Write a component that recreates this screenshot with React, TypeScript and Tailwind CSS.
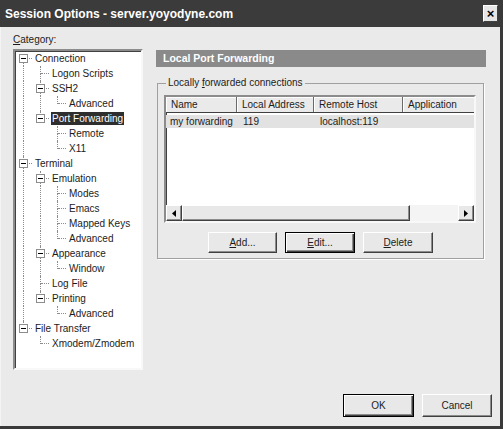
import React from "react";

type Node = { label: string; children?: Node[]; selected?: boolean };

const tree: Node[] = [
  {
    label: "Connection",
    children: [
      { label: "Logon Scripts" },
      { label: "SSH2", children: [{ label: "Advanced" }] },
      {
        label: "Port Forwarding",
        selected: true,
        children: [{ label: "Remote" }, { label: "X11" }],
      },
    ],
  },
  {
    label: "Terminal",
    children: [
      {
        label: "Emulation",
        children: [
          { label: "Modes" },
          { label: "Emacs" },
          { label: "Mapped Keys" },
          { label: "Advanced" },
        ],
      },
      { label: "Appearance", children: [{ label: "Window" }] },
      { label: "Log File" },
      { label: "Printing", children: [{ label: "Advanced" }] },
    ],
  },
  { label: "File Transfer", children: [{ label: "Xmodem/Zmodem" }] },
];

type Row = {
  label: string;
  guides: boolean[];
  hasPrev: boolean;
  hasNext: boolean;
  hasKids: boolean;
  selected: boolean;
};

function flatten(nodes: Node[], depth: number, guides: boolean[]): Row[] {
  const rows: Row[] = [];
  nodes.forEach((n, i) => {
    const hasNext = i < nodes.length - 1;
    rows.push({
      label: n.label,
      guides,
      hasPrev: i > 0 || depth > 0,
      hasNext,
      hasKids: !!n.children,
      selected: !!n.selected,
    });
    if (n.children) rows.push(...flatten(n.children, depth + 1, [...guides, hasNext]));
  });
  return rows;
}

const dots = "border-dotted border-[#8c8c8c]";

function TreeRow({ row }: { row: Row }) {
  return (
    <div className="flex h-[15px] items-center">
      {row.guides.map((g, i) => (
        <div key={i} className="h-full w-[17px] shrink-0">
          {g && <div className={`h-full w-[9px] border-r ${dots}`} />}
        </div>
      ))}
      <div className="relative grid h-full w-[17px] shrink-0 grid-cols-[9px_8px] grid-rows-[8px_7px]">
        <div className={row.hasPrev ? `border-r ${dots}` : ""} />
        <div className={`border-b ${dots}`} />
        <div className={row.hasNext ? `border-r ${dots}` : ""} />
        <div />
        {row.hasKids && (
          <span className="absolute left-[4px] top-[3px] flex h-[9px] w-[9px] items-center justify-center border border-[#8c8c8c] bg-white">
            <span className="h-px w-[5px] bg-black" />
          </span>
        )}
      </div>
      <span
        className={`ml-[2px] whitespace-nowrap px-[1px] leading-[13px] ${
          row.selected ? "bg-[#2e2e2e] text-white" : "text-[#1c1c1c]"
        }`}
      >
        {row.label}
      </span>
    </div>
  );
}

const raised =
  "border border-t-white border-l-white border-r-[#404040] border-b-[#404040] shadow-[inset_-1px_-1px_0_#8c8c8c] bg-[#e8e8e8]";

function Button({
  children,
  primary,
  className = "",
}: {
  children: React.ReactNode;
  primary?: boolean;
  className?: string;
}) {
  return (
    <div
      className={`flex h-[21px] items-center justify-center bg-[#e8e8e8] text-[#1c1c1c] ${
        primary
          ? "border border-black shadow-[inset_1px_1px_0_white,inset_-1px_-1px_0_#404040,inset_-2px_-2px_0_#8c8c8c]"
          : raised
      } ${className}`}
    >
      {children}
    </div>
  );
}

function Arrow({ dir }: { dir: "left" | "right" }) {
  return (
    <svg width="4" height="7" viewBox="0 0 4 7">
      {dir === "left" ? <path d="M4 0 L0 3.5 L4 7 Z" fill="#000" /> : <path d="M0 0 L4 3.5 L0 7 Z" fill="#000" />}
    </svg>
  );
}

const cols = [
  { label: "Name", w: "w-[71px]" },
  { label: "Local Address", w: "w-[77px]" },
  { label: "Remote Host", w: "w-[89px]" },
  { label: "Application", w: "w-[80px]" },
];

export default function App() {
  const rows = flatten(tree, 0, []);
  return (
    <div className="flex h-[429px] w-[503px] flex-col overflow-hidden border-b-[3px] border-r-[3px] border-[#3a3a3a] bg-[#eaeaea] font-['Liberation_Sans',Arial,sans-serif] text-[10px] text-[#1c1c1c]">
      <div className="flex h-[27px] shrink-0 items-center justify-between bg-[#3b3b3b] pl-[5px] pr-[2px]">
        <span className="text-[12px] font-bold text-white">Session Options - server.yoyodyne.com</span>
        <div className="flex h-[17px] w-[15px] items-center justify-center border border-t-white border-l-white border-r-[#404040] border-b-[#404040] bg-[#e6e6e6] text-[13px] font-bold leading-none text-black">
          ×
        </div>
      </div>

      <div className="flex flex-1 flex-col border-l border-[#f4f4f4] pt-[7px]">
        <div className="flex">
          <div className="ml-[12px] flex w-[130px] flex-col">
            <div className="h-[12px] leading-[12px]">
              <u>C</u>ategory:
            </div>
            <div className="mt-[3px] h-[321px] border-2 border-b-[#f8f8f8] border-l-[#8c8c8c] border-r-[#f8f8f8] border-t-[#8c8c8c] bg-white shadow-[inset_1px_1px_0_#404040]">
              {rows.map((r, i) => (
                <TreeRow key={i} row={r} />
              ))}
            </div>
          </div>

          <div className="ml-[13px] mt-[16px] flex w-[330px] flex-col">
            <div className="flex h-[17px] items-center bg-[#8a8a8a] pl-[7px] text-[10.5px] font-bold text-white">
              Local Port Forwarding
            </div>
            <fieldset className="ml-[1px] mt-[10px] w-[327px] border border-[#a0a0a0] px-[6px] pb-[5px] shadow-[1px_1px_0_white]">
              <legend className="ml-[2px] px-[2px] leading-[12px]">
                Locally <u>f</u>orwarded connections
              </legend>
              <div className="mt-[6px] flex h-[128px] w-[312px] flex-col border-2 border-b-[#f8f8f8] border-l-[#8c8c8c] border-r-[#f8f8f8] border-t-[#8c8c8c] bg-white shadow-[inset_1px_1px_0_#404040]">
                <div className="flex h-[16px] shrink-0 overflow-hidden border-b border-[#404040] bg-[#eaeaea]">
                  {cols.map((c) => (
                    <div
                      key={c.label}
                      className={`${c.w} flex shrink-0 items-center border-r border-[#6a6a6a] pl-[5px] shadow-[inset_1px_1px_0_white]`}
                    >
                      {c.label}
                    </div>
                  ))}
                </div>
                <div className="mt-[2px] flex h-[13px] items-center bg-[#e2e2e2]">
                  <span className="w-[71px] pl-[4px]">my forwarding</span>
                  <span className="w-[77px] pl-[6px]">119</span>
                  <span className="pl-[6px]">localhost:119</span>
                </div>
                <div className="flex-1" />
                <div className="flex h-[16px] shrink-0">
                  <div className={`flex w-[16px] items-center justify-center ${raised}`}>
                    <Arrow dir="left" />
                  </div>
                  <div className={`w-[228px] ${raised}`} />
                  <div className="flex-1 bg-[#f4f4f4]" />
                  <div className={`flex w-[16px] items-center justify-center ${raised}`}>
                    <Arrow dir="right" />
                  </div>
                </div>
              </div>
              <div className="mt-[9px] flex justify-center gap-[8px]">
                <Button className="w-[69px]">
                  <span>
                    <u>A</u>dd...
                  </span>
                </Button>
                <Button primary className="w-[70px]">
                  <span>
                    <u>E</u>dit...
                  </span>
                </Button>
                <Button className="w-[70px]">
                  <span>
                    <u>D</u>elete
                  </span>
                </Button>
              </div>
            </fieldset>
          </div>
        </div>

        <div className="mt-auto flex justify-end gap-[8px] pb-[9px] pr-[8px]">
          <Button primary className="h-[23px] w-[71px]">
            OK
          </Button>
          <Button className="h-[23px] w-[70px]">Cancel</Button>
        </div>
      </div>
    </div>
  );
}
